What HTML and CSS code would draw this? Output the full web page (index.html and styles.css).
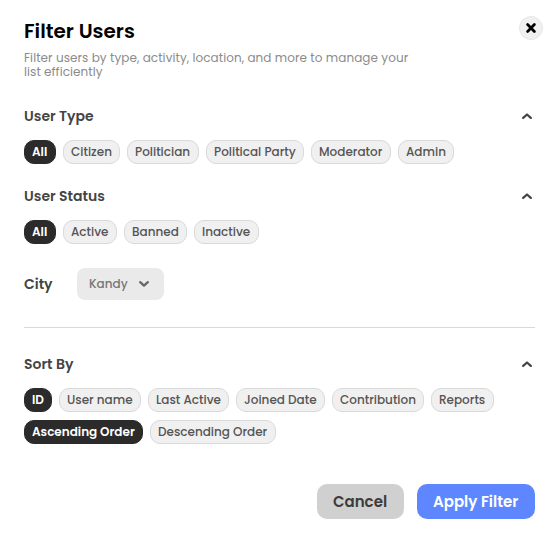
FILE: index.html
```
<!DOCTYPE html>
<html lang="en">
<head>
<meta charset="utf-8">
<title>Filter Users</title>
<link rel="stylesheet" href="styles.css">
</head>
<body>
<main class="dialog">
  <header class="header">
    <div class="heading">
      <h1 class="title">Filter Users</h1>
      <p class="description">Filter users by type, activity, location, and more to manage your list efficiently</p>
    </div>
    <button class="close" aria-label="Close"><svg width="12" height="12" viewBox="0 0 12 12"><path d="M2.6 2.6 9.4 9.4M9.4 2.6 2.6 9.4"/></svg></button>
  </header>

  <section class="section">
    <div class="section-head"><h2>User Type</h2><svg class="chevron" width="10" height="6" viewBox="0 0 10 6"><path d="M1.2 4.9 5 1.5 8.8 4.9"/></svg></div>
    <div class="chips types">
      <button class="chip active">All</button><button class="chip">Citizen</button><button class="chip">Politician</button><button class="chip">Political Party</button><button class="chip">Moderator</button><button class="chip">Admin</button>
    </div>
  </section>

  <section class="section">
    <div class="section-head"><h2>User Status</h2><svg class="chevron" width="10" height="6" viewBox="0 0 10 6"><path d="M1.2 4.9 5 1.5 8.8 4.9"/></svg></div>
    <div class="chips statuses">
      <button class="chip active">All</button><button class="chip">Active</button><button class="chip">Banned</button><button class="chip">Inactive</button>
    </div>
  </section>

  <div class="city">
    <h2>City</h2>
    <button class="select">Kandy<svg class="chevron" width="10" height="6" viewBox="0 0 10 6"><path d="M1.2 1.1 5 4.6 8.8 1.1"/></svg></button>
  </div>

  <hr class="divider">

  <section class="section">
    <div class="section-head"><h2>Sort By</h2><svg class="chevron" width="10" height="6" viewBox="0 0 10 6"><path d="M1.2 4.9 5 1.5 8.8 4.9"/></svg></div>
    <div class="chips fields">
      <button class="chip active">ID</button><button class="chip">User name</button><button class="chip">Last Active</button><button class="chip">Joined Date</button><button class="chip">Contribution</button><button class="chip">Reports</button>
    </div>
    <div class="chips orders">
      <button class="chip active">Ascending Order</button><button class="chip">Descending Order</button>
    </div>
  </section>

  <footer class="actions">
    <button class="button cancel">Cancel</button>
    <button class="button apply">Apply Filter</button>
  </footer>
</main>
</body>
</html>
```
FILE: styles.css
```
* { box-sizing: border-box; }
body {
  margin: 0;
  background: #fff;
  font-family: Poppins, Inter, sans-serif;
}
h1, h2, p { margin: 0; }
button { border: 0; padding: 0; font-family: inherit; }
svg { display: block; fill: none; stroke-linecap: round; stroke-linejoin: round; }

.dialog { padding: 16px 24px 24px; }

.header {
  display: flex;
  justify-content: space-between;
  height: 88px;
  margin-right: -8px;
}
.heading { width: 400px; }
.title { font-size: 20px; font-weight: 600; line-height: 30px; color: #000; }
.description {
  margin-top: 5px;
  font-size: 12px;
  line-height: 14px;
  letter-spacing: 0.07px;
  color: #8b8b8b;
}
.close {
  display: flex;
  align-items: center;
  justify-content: center;
  width: 24px;
  height: 24px;
  border: 1px solid #e6e6e6;
  border-radius: 50%;
  background: #f0f0f0;
}
.close svg { stroke: #000; stroke-width: 2.8; }

h2 { font-size: 14px; font-weight: 600; line-height: 24px; color: #444; }
.section { display: flex; flex-direction: column; gap: 8px; }
.section + .section { margin-top: 20px; }
.section-head {
  display: flex;
  align-items: center;
  justify-content: space-between;
  margin-bottom: 4px;
  padding-right: 3px;
}
.chevron { stroke: #444; stroke-width: 2.2; }

.chips { display: grid; gap: 7px; }
.types { grid-template-columns: 32px 57px 72px 98px 80px 56px; }
.statuses { grid-template-columns: 32px 54px 63px 65px; }
.fields { grid-template-columns: 28px 82px 81px 89px 92px 63px; }
.orders { grid-template-columns: 119px 126px; }
.chip {
  height: 24px;
  padding: 0 7px;
  border: 1px solid #d9d9d9;
  border-radius: 10px;
  background: #f0f0f0;
  color: #555;
  font-size: 12px;
  font-weight: 500;
  line-height: 22px;
  text-align: left;
  white-space: nowrap;
}
.chip.active {
  border-color: #2b2b2b;
  background: #2b2b2b;
  color: #fff;
  font-weight: 600;
}

.city { display: flex; align-items: center; gap: 24px; margin-top: 24px; }
.city h2 { width: 29px; }
.select {
  display: flex;
  align-items: center;
  gap: 11px;
  width: 87px;
  height: 32px;
  padding-left: 12px;
  border-radius: 8px;
  background: #eaeaea;
  color: #777;
  font-size: 12px;
  font-weight: 500;
}
.select .chevron { stroke: #666; }

.divider { height: 1px; margin: 27px 0 24px; border: 0; background: #d9d9d9; }

.actions { display: flex; justify-content: flex-end; gap: 13px; margin-top: 40px; }
.button {
  height: 35px;
  padding: 0 16px;
  border-radius: 10px;
  font-size: 15px;
  font-weight: 600;
  text-align: left;
  white-space: nowrap;
}
.cancel { width: 87px; background: #d0d0d0; color: #3c3c3c; }
.apply { width: 118px; background: #5e87ff; color: #fff; }
```
